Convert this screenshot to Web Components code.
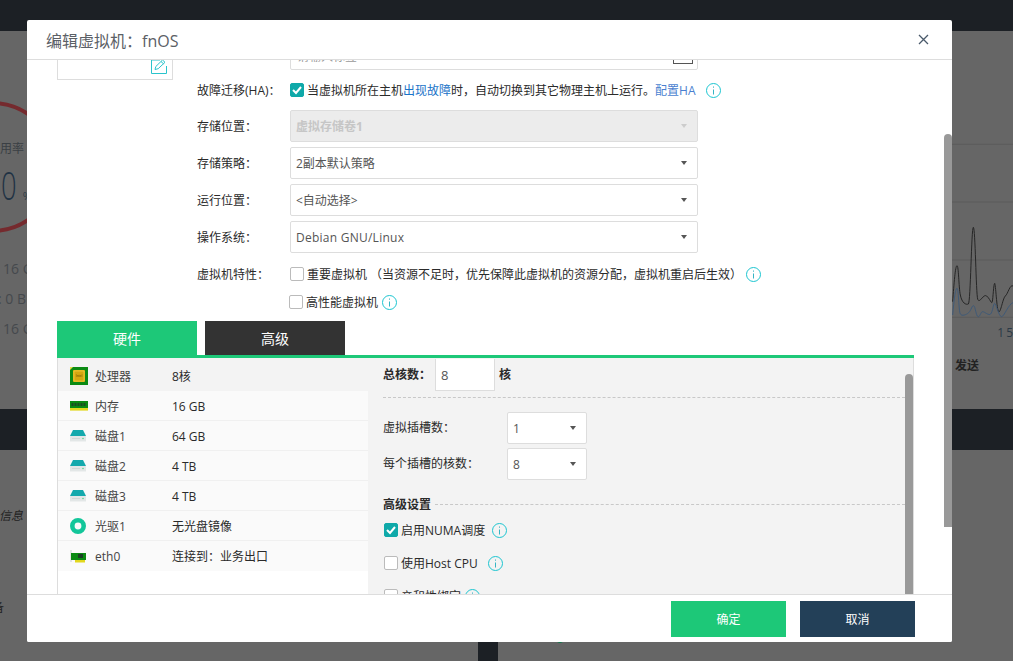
<!DOCTYPE html>
<html lang="zh">
<head>
<meta charset="utf-8">
<title>编辑虚拟机</title>
<style>
  html, body { margin: 0; height: 100%; }
  body {
    width: 1013px;
    height: 661px;
    overflow: hidden;
    position: relative;
    font-family: "Open Sans", "Noto Sans CJK SC", sans-serif;
    font-size: 12px;
    color: #333;
  }
</style>
</head>
<body>

<vm-backdrop></vm-backdrop>

<vm-dialog heading="编辑虚拟机：fnOS">
  <vm-photo></vm-photo>

  <vm-form>
    <vm-field>
      <vm-textbox>请输入标签</vm-textbox>
    </vm-field>
    <vm-field label="故障迁移(HA)：" tall>
      <vm-check checked>当虚拟机所在主机<span style="color:#1a73c8">出现故障</span>时，自动切换到其它物理主机上运行。<span style="color:#4a7fd0">配置HA</span></vm-check>
      <vm-info style="margin-left:11px"></vm-info>
    </vm-field>
    <vm-field label="存储位置："><vm-select disabled>虚拟存储卷1</vm-select></vm-field>
    <vm-field label="存储策略："><vm-select>2副本默认策略</vm-select></vm-field>
    <vm-field label="运行位置："><vm-select>&lt;自动选择&gt;</vm-select></vm-field>
    <vm-field label="操作系统："><vm-select><span style="letter-spacing:.25px">Debian GNU/Linux</span></vm-select></vm-field>
    <vm-field label="虚拟机特性：">
      <vm-check>重要虚拟机 （当资源不足时，优先保障此虚拟机的资源分配，虚拟机重启后生效）</vm-check>
      <vm-info style="margin-left:4px"></vm-info>
    </vm-field>
    <vm-field short>
      <vm-check style="margin-left:-1px">高性能虚拟机</vm-check>
      <vm-info style="margin-left:4px"></vm-info>
    </vm-field>
  </vm-form>

  <vm-tabs slot="wide"></vm-tabs>

  <vm-hardware slot="wide">
    <vm-hw-list slot="list">
      <vm-hw-row icon="cpu" name="处理器" selected>8核</vm-hw-row>
      <vm-hw-row icon="ram" name="内存">16 GB</vm-hw-row>
      <vm-hw-row icon="disk" name="磁盘1">64 GB</vm-hw-row>
      <vm-hw-row icon="disk" name="磁盘2">4 TB</vm-hw-row>
      <vm-hw-row icon="disk" name="磁盘3">4 TB</vm-hw-row>
      <vm-hw-row icon="cd" name="光驱1">无光盘镜像</vm-hw-row>
      <vm-hw-row icon="nic" name="eth0" last>连接到：业务出口</vm-hw-row>
    </vm-hw-list>
    <vm-cpu-pane></vm-cpu-pane>
  </vm-hardware>

  <vm-button slot="footer" color="#1dc878">确定</vm-button>
  <vm-button slot="footer" color="#234058">取消</vm-button>
</vm-dialog>

<script>
  // registers an element whose shadow root is cloned from a template
  function register(name, html, setup) {
    const template = document.createElement("template");
    template.innerHTML = html;
    customElements.define(name, class extends HTMLElement {
      constructor() {
        super();
        this.attachShadow({ mode: "open" });
        this.shadowRoot.appendChild(template.content.cloneNode(true));
      }
      connectedCallback() {
        if (setup) setup(this, this.shadowRoot);
      }
    });
  }

  const hwIcons = {
    cpu: `<svg width="18" height="18" viewBox="0 0 18 18">
        <rect width="18" height="18" fill="#0b8a12"/>
        <path d="M0 0h3L0 3z" fill="#e6e04a"/>
        <rect x="3" y="3" width="12" height="12" rx="1" fill="#e0ae12"/>
        <rect x="4" y="4" width="10" height="10" fill="#d4a70f" stroke="#f1d34d" stroke-width=".6"/>
        <text x="9" y="10" font-size="3.4" text-anchor="middle" fill="#6d5205" font-family="Liberation Sans">Intel</text>
      </svg>`,
    ram: `<svg width="18" height="10" viewBox="0 0 18 10">
        <rect y="0" width="18" height="7" fill="#0b8a12"/>
        <rect y="7" width="18" height="2.6" fill="#e2d81e"/>
        <path d="M1.5 2h2v3h-2zM4.5 2h2v3h-2zM7.5 2h2v3h-2zM10.5 2h2v3h-2zM13.500 2h2v3h-2z" fill="#1c4a22"/>
      </svg>`,
    disk: `<svg width="16" height="12" viewBox="0 0 16 12">
        <path d="M3 0h10l3 6H0z" fill="#14a9ad"/>
        <rect y="6" width="16" height="5.500" rx=".5" fill="#e3e7e7"/>
        <path d="M2 8.500h8" stroke="#c9d0d0" stroke-width=".7"/>
        <circle cx="13" cy="8.500" r=".8" fill="#5fd08f"/>
      </svg>`,
    cd: `<svg width="16" height="16" viewBox="0 0 16 16">
        <circle cx="8" cy="8" r="5.700" fill="none" stroke="#13c69a" stroke-width="4.600"/>
      </svg>`,
    nic: `<svg width="16" height="13" viewBox="0 0 16 13">
        <path d="M0 0h2v12H0z" fill="#e2e4e4"/>
        <rect x="1" y="3" width="15" height="7" fill="#0b8a12"/>
        <rect x="8" y="4" width="5" height="4" fill="#1b3f25"/>
        <rect x="5" y="10" width="10" height="2.500" fill="#e2d81e"/>
      </svg>`
  };

  register("vm-backdrop", `
    <style>
      :host {
        position: absolute;
        inset: 0;
        display: flex;
        flex-direction: column;
        background: #1c2025;
        overflow: hidden;
        color: #3a3f44;
      }
      .top { height: 31px; flex: none; }
      .panel {
        flex: none;
        height: 378px;
        background: #666;
        display: flex;
        justify-content: space-between;
      }
      .stats { width: 27px; position: relative; overflow: hidden; white-space: nowrap; }
      .ring { position: absolute; left: 0; top: 0; }
      .usage { margin-top: 110px; line-height: 16px; text-indent: -12px; }
      .usage-num { display: flex; align-items: baseline; margin-top: 5px; color: #1f3244; font-size: 38px; line-height: 46px; padding-left: 1px; }
      .usage-num b { display: inline-block; font-weight: 300; width: 22px; transform: scaleX(.72); transform-origin: left; }
      .usage-num small { font-size: 11px; color: #2b3a47; }
      .stat { font-size: 14px; line-height: 20px; color: #45494d; margin-bottom: 10px; padding-left: 3px; }
      .stats-list { margin-top: 40px; }
      .stat.b { padding-left: 0; text-indent: -2px; }
      .chart-col { width: 61px; overflow: hidden; }
      .chart-col svg { display: block; }
      .tick { text-align: right; font-size: 12px; line-height: 16px; letter-spacing: 2px; color: #2b3a47; margin-top: 1px; margin-right: -2px; }
      .send { font-size: 12px; font-weight: 700; line-height: 16px; color: #222; margin: 17px 0 0 3px; }
      .gap { height: 41px; flex: none; }
      .lower { flex: 1; display: flex; gap: 20px; }
      .lower > div { background: #666; }
      .l { width: 478px; overflow: hidden; color: #222; white-space: nowrap; }
      .r { flex: 1; overflow: hidden; }
      .info { margin-top: 58px; font-style: italic; line-height: 16px; text-indent: -1px; }
      .bei { margin-top: 76px; line-height: 16px; text-indent: -20px; }
      .dot { width: 10px; height: 10px; border-radius: 50%; background: #0d7a4c; margin: 183px 0 0 57px; }
    </style>
    <div class="top"></div>
    <div class="panel">
      <div class="stats">
        <svg class="ring" width="27" height="240">
          <circle cx="-8" cy="136" r="64" fill="none" stroke="#752a2e" stroke-width="4"/>
        </svg>
        <div class="usage">使用率</div>
        <div class="usage-num"><b>0</b><small>%</small></div>
        <div class="stats-list">
          <div class="stat">16 G</div>
          <div class="stat b">: 0 B</div>
          <div class="stat">16 G</div>
        </div>
      </div>
      <div class="chart-col">
        <svg width="61" height="293" viewBox="216 93 183 879">
          <path d="M216 433H399M216 606H399M216 780H399M216 952H399" stroke="#565656" stroke-width="2" fill="none"/>
          <path d="M218 905C222 850 226 797 231 797S236 860 241 885S258 915 265 912S274 682 280 682S288 880 293 897S310 880 320 888S335 915 337 905S341 850 344 850S350 930 356 935S368 895 376 888S390 852 399 858" fill="none" stroke="#262626" stroke-width="3"/>
          <path d="M218 945C222 900 226 865 231 865S236 935 241 942S258 945 266 938S276 915 281 917S288 948 294 950S302 935 308 935S326 948 332 942S340 910 344 910S356 948 364 950S385 912 399 908" fill="none" stroke="#3f5a78" stroke-width="3"/>
        </svg>
        <div class="tick">15</div>
        <div class="send">发送</div>
      </div>
    </div>
    <div class="gap"></div>
    <div class="lower">
      <div class="l">
        <div class="info">信息</div>
        <div class="bei">设备</div>
      </div>
      <div class="r"><div class="dot"></div></div>
    </div>
  `);

  register("vm-dialog", `
    <style>
      :host {
        position: absolute;
        left: 27px;
        top: 20px;
        width: 925px;
        height: 622px;
        background: #fff;
        border-radius: 2px;
        display: flex;
        flex-direction: column;
        overflow: hidden;
      }
      header {
        flex: none;
        height: 39px;
        border-bottom: 1px solid #ddd;
        padding: 0 23px 0 19px;
        display: flex;
        align-items: center;
        justify-content: space-between;
        font-size: 16px;
        color: #5b6066;
      }
      header svg { display: block; }
      .body { flex: 1; min-height: 0; overflow: hidden; padding-left: 30px; }
      .top { display: flex; }
      .wide { width: 857px; display: block; }
      footer {
        flex: none;
        height: 41px;
        border-top: 1px solid #ddd;
        padding: 6px 37px 0 0;
        display: flex;
        justify-content: flex-end;
        gap: 14px;
        background: #fff;
      }
      .scroll {
        position: absolute;
        right: 0;
        top: 114px;
        width: 8px;
        height: 393px;
        background: #999;
        border-radius: 4px 4px 0 0;
      }
    </style>
    <header>
      <span class="title"></span>
      <svg width="11" height="11" viewBox="0 0 11 11"><path d="M1 1l9 9M10 1l-9 9" stroke="#4a5a6b" stroke-width="1.300"/></svg>
    </header>
    <div class="body">
      <div class="top"><slot></slot></div>
      <div class="wide"><slot name="wide"></slot></div>
    </div>
    <footer><slot name="footer"></slot></footer>
    <div class="scroll"></div>
  `, (el, root) => {
    root.querySelector(".title").textContent = el.getAttribute("heading");
  });

  register("vm-photo", `
    <style>
      :host {
        display: flex;
        flex: none;
        box-sizing: border-box;
        width: 116px;
        height: 100px;
        margin: -80px 24px 0 0;
        border: 1px solid #ddd;
        justify-content: flex-end;
        align-items: flex-end;
        padding: 0 5px 5px 0;
      }
      svg { display: block; }
    </style>
    <svg width="16" height="15" viewBox="0 0 16 15" fill="none" stroke="#2ac4cc" stroke-width="1">
      <path d="M9 1H.5v13.500h15V7"/>
      <path d="M4 10.500l.8-3L11.500 1l2.500 2.300-6.800 6.400z"/>
      <path d="M10 2.500l2.500 2.300"/>
    </svg>
  `);

  register("vm-form", `
    <style>
      :host {
        display: flex;
        flex-direction: column;
        gap: 5px;
        margin-top: -22px;
      }
    </style>
    <slot></slot>
  `);

  register("vm-field", `
    <style>
      :host {
        display: flex;
        align-items: center;
        min-height: 32px;
      }
      :host([tall]) { min-height: 30px; }
      :host([short]) { min-height: 24px; margin-top: -5px; }
      label { flex: none; width: 93px; color: #2a2a2a; white-space: nowrap; }
    </style>
    <label></label>
    <slot></slot>
  `, (el, root) => {
    root.querySelector("label").textContent = el.getAttribute("label") || "";
  });

  register("vm-textbox", `
    <style>
      :host {
        display: flex;
        align-items: center;
        width: 408px;
        height: 32px;
        box-sizing: border-box;
        border: 1px solid #ddd;
        border-radius: 2px;
        padding: 0 4px 0 6px;
        color: #999;
        justify-content: space-between;
      }
      span { padding-top: 3px; }
      i { display: block; width: 20px; height: 20px; box-sizing: border-box; border: 1px solid #555; }
    </style>
    <span><slot></slot></span><i></i>
  `);

  register("vm-select", `
    <style>
      :host {
        display: flex;
        align-items: center;
        justify-content: space-between;
        width: var(--select-width, 408px);
        height: 32px;
        box-sizing: border-box;
        border: 1px solid #ddd;
        border-radius: 2px;
        background: #fff;
        padding: 0 10px 0 5px;
        color: #555;
      }
      :host([disabled]) { background: #ececec; color: #c6c6c6; font-weight: 700; }
      i { width: 0; height: 0; border: 3.5px solid transparent; border-top: 4px solid #555; border-bottom: 0; }
      :host([disabled]) i { border-top-color: #ccc; }
    </style>
    <span><slot></slot></span><i></i>
  `);

  register("vm-check", `
    <style>
      :host {
        display: inline-flex;
        align-items: center;
        gap: 3px;
        white-space: nowrap;
        color: #2a2a2a;
      }
      .box {
        flex: none;
        width: 14px;
        height: 14px;
        box-sizing: border-box;
        border: 1px solid #bbb;
        border-radius: 2px;
        background: #fff;
      }
      :host([checked]) .box { background: #0fa9a9; border-color: #0fa9a9; }
      svg { display: none; }
      :host([checked]) svg { display: block; }
    </style>
    <span class="box">
      <svg width="12" height="12" viewBox="0 0 12 12"><path d="M2 6l3 3 5-6" fill="none" stroke="#fff" stroke-width="2"/></svg>
    </span>
    <span><slot></slot></span>
  `);

  register("vm-info", `
    <style>
      :host { display: inline-block; width: 15px; height: 15px; flex: none; }
      svg { display: block; }
    </style>
    <svg width="15" height="15" viewBox="0 0 15 15" fill="none" stroke="#1cc5d0">
      <circle cx="7.500" cy="7.500" r="7"/>
      <path d="M7.500 6.500v5M7.500 3.500v1.200" stroke="#35b4c4"/>
    </svg>
  `);

  register("vm-tabs", `
    <style>
      :host {
        display: flex;
        gap: 8px;
        margin-top: 7px;
        border-bottom: 3px solid #1dc878;
      }
      div {
        width: 140px;
        height: 34px;
        line-height: 36px;
        text-align: center;
        color: #fff;
        font-size: 14px;
      }
      .on { background: #1dc878; }
      .off { background: #333; }
    </style>
    <div class="on">硬件</div>
    <div class="off">高级</div>
  `);

  register("vm-hardware", `
    <style>
      :host {
        display: flex;
        height: 240px;
        box-sizing: border-box;
        border-left: 1px solid #ddd;
        border-right: 1px solid #ddd;
        position: relative;
      }
      .scroll {
        position: absolute;
        right: 0;
        top: 16px;
        width: 8px;
        height: 230px;
        background: #999;
        border-radius: 4px 4px 0 0;
      }
    </style>
    <slot name="list"></slot>
    <slot></slot>
    <div class="scroll"></div>
  `);

  register("vm-hw-list", `
    <style>
      :host {
        display: block;
        flex: none;
        width: 310px;
        border-top: 3px solid #f3f3f3;
        box-sizing: border-box;
      }
    </style>
    <slot></slot>
  `);

  register("vm-hw-row", `
    <style>
      :host {
        display: flex;
        align-items: center;
        height: 30px;
        box-sizing: border-box;
        background: #fafafa;
        border-bottom: 1px solid #f0f0f0;
        padding: 1px 0 0 12px;
        color: #2a2a2a;
      }
      :host([selected]) { background: #f3f3f3; border-bottom-color: #f3f3f3; padding-top: 0; }
      :host([last]) { border-bottom: 0; padding-top: 0; }
      .icon { flex: none; width: 25px; display: flex; align-items: center; }
      .name { flex: none; width: 77px; color: #444; }
      svg { display: block; }
    </style>
    <span class="icon"></span>
    <span class="name"></span>
    <slot></slot>
  `, (el, root) => {
    root.querySelector(".icon").innerHTML = hwIcons[el.getAttribute("icon")];
    root.querySelector(".name").textContent = el.getAttribute("name");
  });

  register("vm-cpu-pane", `
    <style>
      :host {
        display: block;
        flex: 1;
        background: #f3f3f3;
        padding: 1px 8px 0 15px;
        overflow: hidden;
        color: #2a2a2a;
        --select-width: 80px;
      }
      .total { display: flex; align-items: center; font-weight: 700; height: 32px; white-space: nowrap; }
      .total .lab, .total .unit { padding-bottom: 3px; }
      .total .lab { width: 48px; }
      .total .input {
        width: 60px;
        height: 32px;
        box-sizing: border-box;
        margin: 0 4px;
        padding-left: 5px;
        background: #fff;
        border: 1px solid #ddd;
        border-top: 0;
        line-height: 32px;
        font-weight: 400;
        color: #555;
        font-size: 13px;
      }
      hr { border: 0; border-top: 1px dashed #c8c8c8; margin: 6px 0 0; height: 0; }
      .line { display: flex; align-items: center; height: 32px; margin-bottom: 4px; }
      .line span { width: 124px; padding-bottom: 3px; }
      .first { margin-top: 14px; }
      .adv { display: flex; align-items: center; gap: 4px; font-weight: 700; margin-top: 12px; height: 24px; }
      .adv::after { content: ""; flex: 1; border-top: 1px dashed #c8c8c8; }
      .opt { display: flex; align-items: center; height: 20px; }
      .opt + .opt { margin-top: 13px; }
      .opts { margin: 4px 0 0 1px; }
    </style>
    <div class="total">
      <span class="lab">总核数：</span><span class="input">8</span><span class="unit">核</span>
    </div>
    <hr>
    <div class="line first"><span>虚拟插槽数：</span><vm-select>1</vm-select></div>
    <div class="line"><span>每个插槽的核数：</span><vm-select>8</vm-select></div>
    <div class="adv">高级设置</div>
    <div class="opts">
      <div class="opt"><vm-check checked>启用NUMA调度</vm-check><vm-info style="margin-left:7px"></vm-info></div>
      <div class="opt"><vm-check>使用Host CPU</vm-check><vm-info style="margin-left:10px"></vm-info></div>
      <div class="opt"><vm-check>亲和性绑定</vm-check><vm-info style="margin-left:4px"></vm-info></div>
    </div>
  `);

  register("vm-button", `
    <style>
      :host {
        display: flex;
        align-items: center;
        justify-content: center;
        width: 115px;
        height: 36px;
        color: #fff;
        font-size: 12px;
      }
    </style>
    <slot></slot>
  `, (el) => {
    el.style.background = el.getAttribute("color");
  });
</script>
</body>
</html>
